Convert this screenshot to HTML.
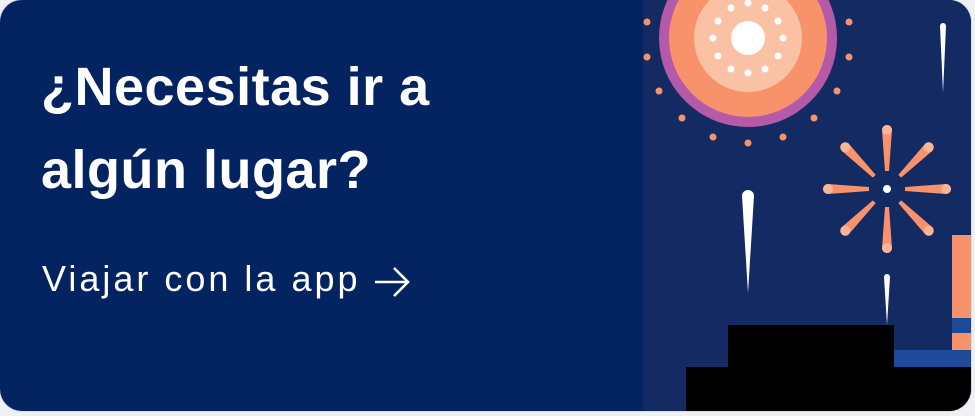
<!DOCTYPE html>
<html><head><meta charset="utf-8"><style>
html,body{margin:0;padding:0;background:#eef0f3;width:975px;height:416px;overflow:hidden}
.card{position:absolute;left:0;top:0;width:971px;height:411px;border-radius:22px;overflow:hidden;background:#032461;box-shadow:0 0 0 1px #d9dde3}
.h{position:absolute;left:41px;top:46px;color:#fff;font-family:"Liberation Sans",sans-serif;font-weight:bold;font-size:54px;line-height:83px;letter-spacing:0.5px;margin:0;white-space:nowrap}
.l{position:absolute;left:42px;top:254px;color:#fff;font-family:"Liberation Sans",sans-serif;font-size:36px;line-height:50px;letter-spacing:3px;white-space:nowrap}
svg{position:absolute;left:0;top:0}
</style></head><body>
<div class="card">
<svg width="971" height="411" viewBox="0 0 971 411">
<rect x="643" y="0" width="328" height="411" fill="#132b62"/>
<circle cx="748" cy="38" r="89" fill="#b55aa8"/>
<circle cx="748" cy="38" r="79" fill="#f8926a"/>
<circle cx="748" cy="38" r="54" fill="#fbc1a5"/>
<circle cx="748" cy="38" r="17" fill="#fff"/>
<g fill="#fff">
<circle cx="783" cy="38" r="3.5"/><circle cx="713" cy="38" r="3.5"/><circle cx="748" cy="3" r="3.5"/><circle cx="748" cy="73" r="3.5"/>
<circle cx="778" cy="21" r="3.5"/><circle cx="718" cy="21" r="3.5"/><circle cx="778" cy="56" r="3.5"/><circle cx="718" cy="56" r="3.5"/>
<circle cx="765" cy="8" r="3.5"/><circle cx="731" cy="8" r="3.5"/><circle cx="765" cy="69" r="3.5"/><circle cx="731" cy="69" r="3.5"/>
</g>
<g fill="#f8926a">
<circle cx="647" cy="22" r="3.5"/><circle cx="849" cy="22" r="3.5"/><circle cx="647" cy="57" r="3.5"/><circle cx="849" cy="57" r="3.5"/>
<circle cx="659" cy="91" r="3.5"/><circle cx="837" cy="91" r="3.5"/><circle cx="682" cy="118" r="3.5"/><circle cx="814" cy="118" r="3.5"/>
<circle cx="713" cy="137" r="3.5"/><circle cx="783" cy="137" r="3.5"/><circle cx="748" cy="143" r="3.5"/>
</g>
<g transform="translate(887,189)">
<circle r="4" fill="#fff"/>
<g id="ray"><path d="M-2,-18 L-5,-59 A5,5 0 0 1 5,-59 L2,-18 Z" fill="#f8926a"/><circle cx="0" cy="-59" r="5" fill="#fbb596"/></g>
<use href="#ray" transform="rotate(45)"/><use href="#ray" transform="rotate(90)"/><use href="#ray" transform="rotate(135)"/>
<use href="#ray" transform="rotate(180)"/><use href="#ray" transform="rotate(225)"/><use href="#ray" transform="rotate(270)"/><use href="#ray" transform="rotate(315)"/>
</g>
<path d="M940,26 A3,3 0 0 1 946,26 L943,93 Z" fill="#fff"/>
<path d="M742,196 A6,6 0 0 1 754,196 L748,293 Z" fill="#fff"/>
<path d="M884,277 A3,3 0 0 1 890,277 L887,325 Z" fill="#fff"/>
<rect x="952" y="235" width="19" height="115" fill="#f8926a"/>
<rect x="952" y="318" width="19" height="15" fill="#1e4a9a"/>
<rect x="894" y="350" width="77" height="17" fill="#1e4a9a"/>
<rect x="728" y="325" width="166" height="45" fill="#000"/>
<rect x="686" y="367" width="285" height="44" fill="#000"/>
<path d="M375,282 H408 M394,268 L408,282 L394,296" stroke="#fff" stroke-width="2.6" fill="none"/>
</svg>
<div class="h">¿Necesitas ir a<br>algún lugar?</div>
<div class="l">Viajar con la app</div>
</div>
</body></html>
